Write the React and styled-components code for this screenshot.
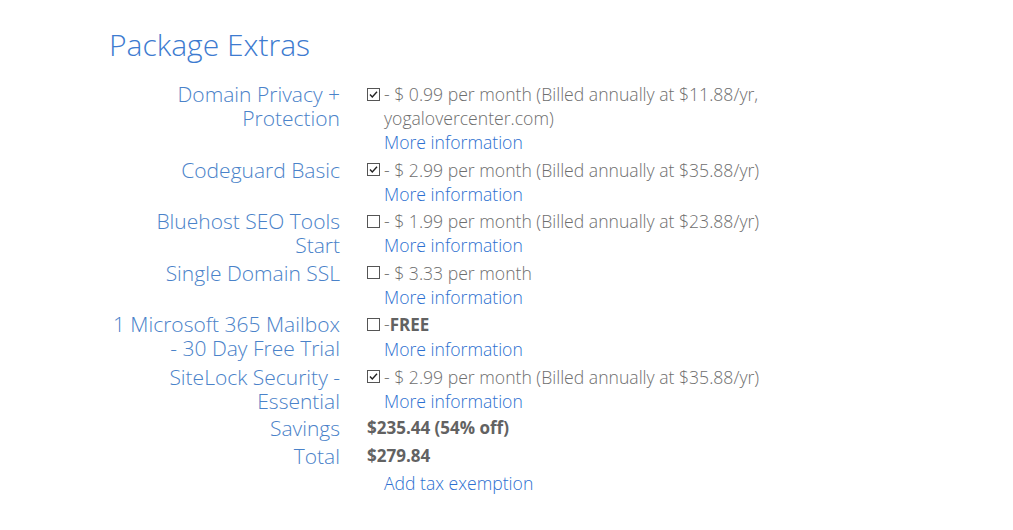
import React from 'react';
import styled, {createGlobalStyle} from 'styled-components';

const GlobalStyle = createGlobalStyle`
  body {
    margin: 0;
    background: #fff;
    font-family: "Open Sans", "Liberation Sans", sans-serif;
  }
`;

const Wrapper = styled.div`
  padding: 25px 0 0 109px;
`;

const Title = styled.h2`
  margin: 1px 0 18px;
  font-size: 30px;
  line-height: 38px;
  font-weight: 300;
  color: #3d7bd0;
`;

const Grid = styled.div`
  display: grid;
  grid-template-columns: 231px 400px;
  column-gap: 27px;
  row-gap: 3.5px;
`;

const Label = styled.div`
  padding-left: 2px;
  font-size: 21px;
  line-height: 24px;
  font-weight: 300;
  text-align: right;
  color: #4a82c9;
`;

const Value = styled.div`
  display: flex;
  align-items: flex-start;
  font-size: 17.6px;
  line-height: 24px;
  font-weight: 300;
  color: #6e6e6e;
`;

const Box = styled.span`
  flex: none;
  width: 17px;
  height: 24px;
  display: flex;
  align-items: center;
`;

const Text = styled.div`
  flex: 1;
  padding-left: ${p => (p.indent ? '17px' : '0')};
`;

const Link = styled.a`
  display: block;
  color: #2c6fd0;
  text-decoration: none;
`;

const Strong = styled.b`
  font-size: 17px;
  font-weight: 700;
  color: #626262;
`;

function Check({checked}) {
    return (
        <svg width="13" height="13" viewBox="0 0 13 13">
            <rect x="0.5" y="0.5" width="12" height="12" fill="#fff" stroke="#555" strokeWidth="1"/>
            {checked && <path d="M3 6.5 L5.3 9 L10 3.8" fill="none" stroke="#222" strokeWidth="1.4"/>}
        </svg>
    );
}

const extras = [
    {label: 'Domain Privacy + Protection', checked: true, text: '- $ 0.99 per month (Billed annually at $11.88/yr, yogalovercenter.com)'},
    {label: 'Codeguard Basic', checked: true, text: '- $ 2.99 per month (Billed annually at $35.88/yr)'},
    {label: 'Bluehost SEO Tools Start', checked: false, text: '- $ 1.99 per month (Billed annually at $23.88/yr)'},
    {label: 'Single Domain SSL', checked: false, text: '- $ 3.33 per month'},
    {label: '1 Microsoft 365 Mailbox - 30 Day Free Trial', checked: false, free: true},
    {label: 'SiteLock Security - Essential', checked: true, text: '- $ 2.99 per month (Billed annually at $35.88/yr)'},
];

function App() {
    return (
        <Wrapper>
            <GlobalStyle/>
            <Title>Package Extras</Title>
            <Grid>
                {extras.map(item => (
                    <React.Fragment key={item.label}>
                        <Label>{item.label}</Label>
                        <Value>
                            <Box><Check checked={item.checked}/></Box>
                            <Text>
                                {item.free ? <span>-<Strong>FREE</Strong></span> : item.text}
                                <Link href="#">More information</Link>
                            </Text>
                        </Value>
                    </React.Fragment>
                ))}
                <Label>Savings</Label>
                <Value><Strong>$235.44 (54% off)</Strong></Value>
                <Label>Total</Label>
                <Value><Strong>$279.84</Strong></Value>
                <div/>
                <Value><Text indent><Link href="#">Add tax exemption</Link></Text></Value>
            </Grid>
        </Wrapper>
    );
}

export default App;
